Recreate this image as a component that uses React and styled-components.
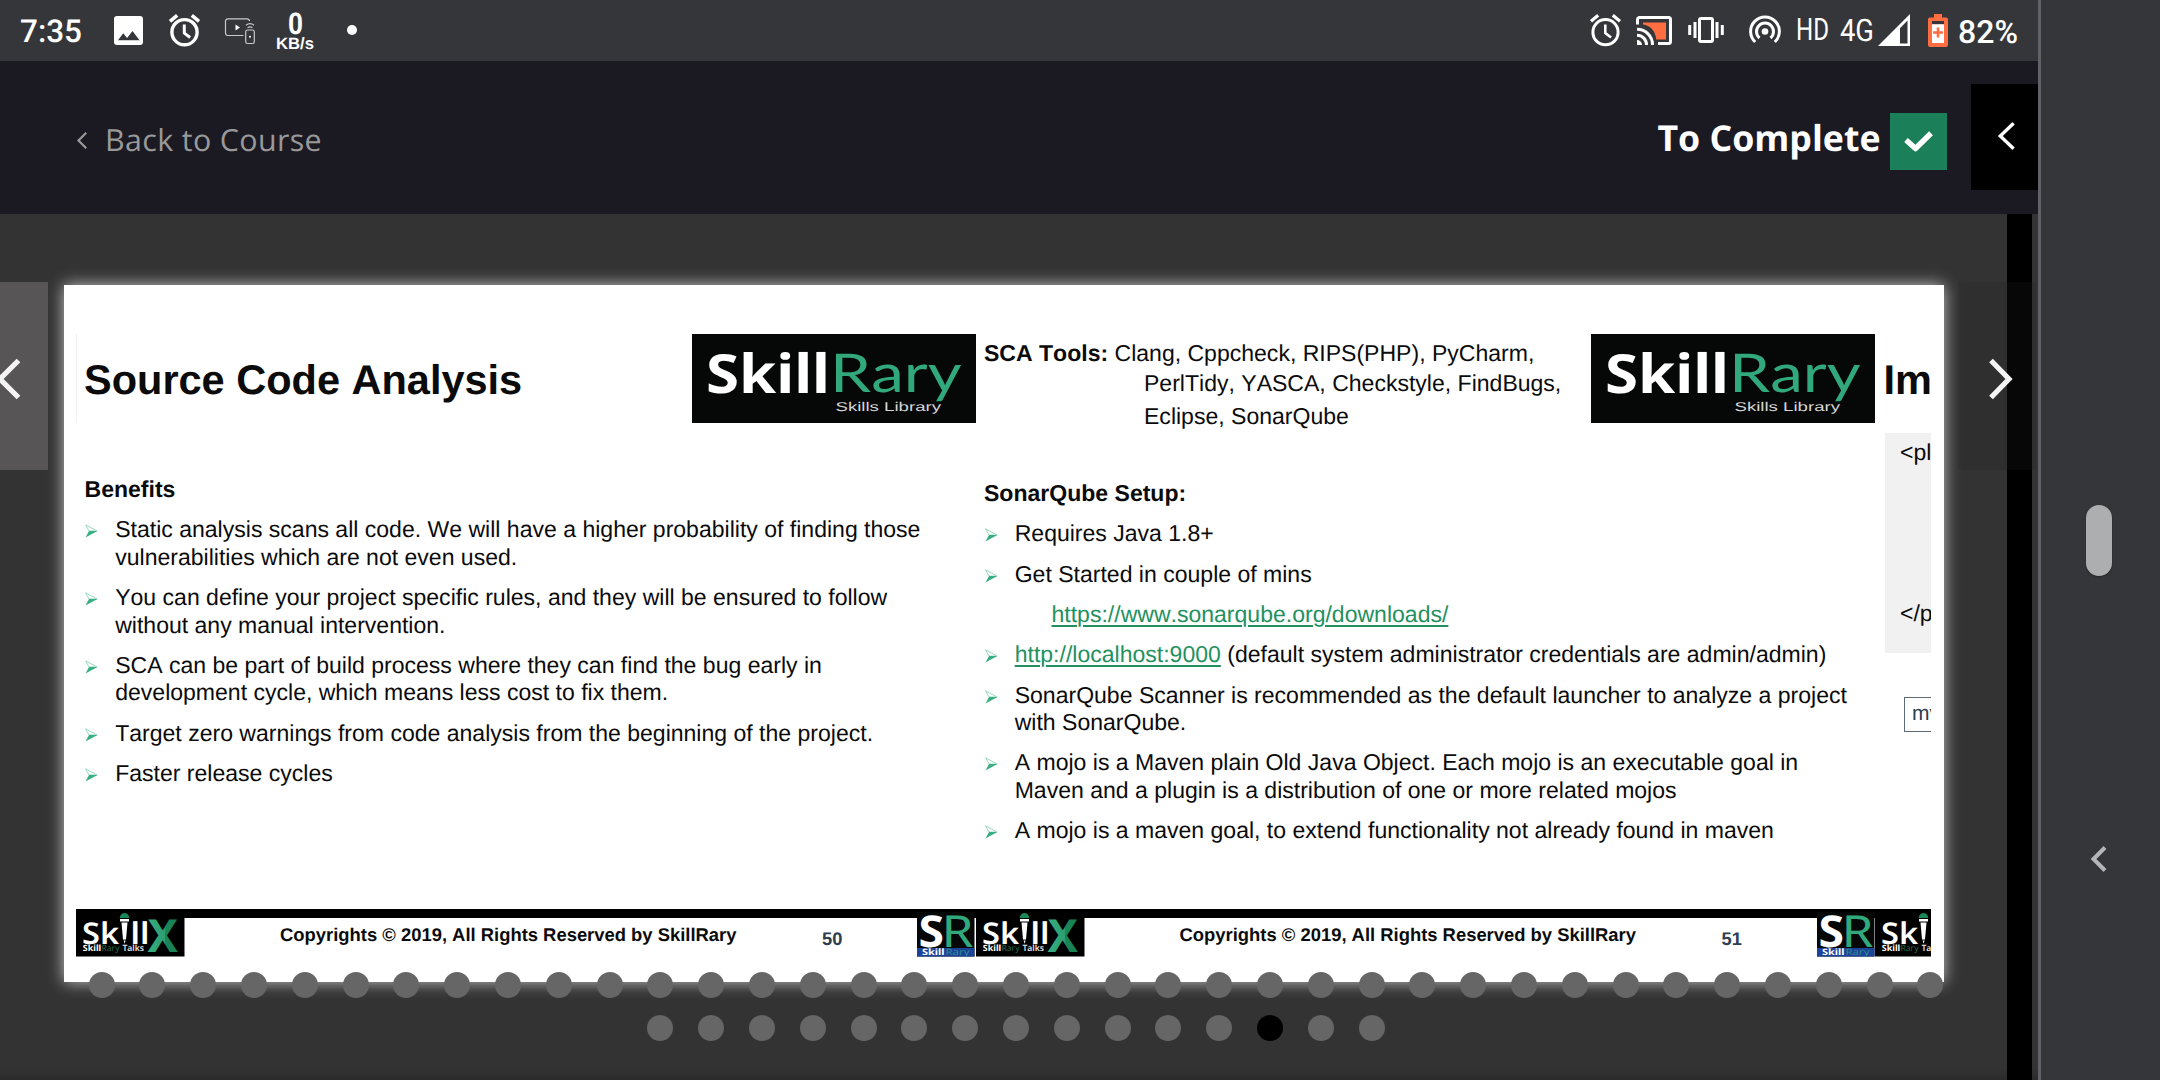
import React from 'react';
import styled, { createGlobalStyle } from 'styled-components';

const GlobalStyle = createGlobalStyle`
  * { box-sizing: border-box; }
  html, body { margin: 0; padding: 0; background: #333; overflow: hidden; }
  body { font-family: "Liberation Sans", Arial, sans-serif; text-rendering: geometricPrecision; }
  svg { display: block; flex-shrink: 0; overflow: visible; }
`;

/* ---------- shell ---------- */

const Screen = styled.div`
  display: flex;
  width: 2160px;
  height: 1080px;
  overflow: hidden;
`;

const Main = styled.div`
  display: flex;
  flex-direction: column;
  width: 2038px;
  height: 1080px;
  background: #333;
  overflow: hidden;
`;

const NavBar = styled.aside`
  flex: 1;
  display: flex;
  flex-direction: column;
  align-items: center;
  padding: 505px 4px 0 0;
  background: #35363a;
  border-left: 3px solid #616268;
`;

const HomePill = styled.div`
  width: 26px;
  height: 71px;
  border-radius: 13px;
  background: #adaeb0;
  margin-bottom: 270px;
  box-shadow: 0 1px 2px rgba(0, 0, 0, 0.3);
`;

/* ---------- status bar ---------- */

const StatusBar = styled.div`
  display: flex;
  justify-content: space-between;
  height: 61px;
  flex-shrink: 0;
  padding: 0 20px 0 20px;
  background: #35363a;
  color: #fff;
  font-family: Roboto, sans-serif;
`;

const StatusGroup = styled.div`
  display: flex;
  align-items: flex-start;
  height: 61px;
`;

const StatusText = styled.span`
  width: ${(p) => p.$w}px;
  margin-left: ${(p) => p.$ml || 0}px;
  font-size: ${(p) => p.$size || 32}px;
  font-weight: 500;
  line-height: 38px;
  padding-top: 12.5px;
  white-space: nowrap;
`;

const Speed = styled.div`
  display: flex;
  flex-direction: column;
  align-items: center;
  width: 38px;
  margin: 6px 0 0 21px;
`;

const StatusDot = styled.i`
  width: 10px;
  height: 10px;
  border-radius: 50%;
  background: #fff;
  margin: 25px 0 0 33px;
`;

const Slot = styled.span`
  display: block;
  margin-left: ${(p) => p.$ml}px;
  padding-top: ${(p) => p.$pt}px;
`;

const AlarmIcon = ({ sw = 3 }) => (
  <svg width="31" height="33" viewBox="0 0 31 33" fill="none" stroke="#fff" strokeWidth={sw}>
    <circle cx="15.5" cy="18.2" r="12.6" />
    <path d="M15.3 10.5v8.6l5.8 4.4" strokeWidth={sw - 0.4} />
    <path d="M1 7.3 8.2 1.3M30 7.3 22.800 1.3" strokeWidth={sw + 0.2} />
  </svg>
);

const ImageIcon = () => (
  <svg width="29" height="29" viewBox="0 0 29 29">
    <path
      fill="#fff"
      fillRule="evenodd"
      d="M3 0h23a3 3 0 0 1 3 3v23a3 3 0 0 1-3 3H3a3 3 0 0 1-3-3V3a3 3 0 0 1 3-3zM4 24.300h21.500L18.500 15l-5.400 7L9.200 17.300z"
    />
  </svg>
);

const CastPhoneIcon = () => (
  <svg width="30" height="27" viewBox="0 0 30 27" fill="none" stroke="#c9c9cb" strokeWidth="1.200">
    <path d="M18.500 17.500H3a2.500 2.500 0 0 1-2.500-2.500V3A2.500 2.500 0 0 1 3 .8h19a2.500 2.500 0 0 1 2.500 2.200" />
    <rect x="20.700" y="12" width="8.600" height="13.500" rx="1.800" />
    <path d="M21 7.200q4-3 8 0M22.600 9.800q2.400-1.800 4.800 0" />
    <path d="M10.500 6.500v6l4.500-3z" fill="#fff" stroke="none" />
    <circle cx="25" cy="18.700" r="1" fill="#fff" stroke="none" />
  </svg>
);

const CastIcon = () => (
  <svg width="36" height="30" viewBox="0 0 36 30" fill="none" stroke="#fff" strokeWidth="3">
    <path d="M7 6.500h23v17h-9.800C19.500 14.500 14 9.500 7 8.500z" fill="#ff6e40" stroke="none" />
    <path d="M1.500 8.500V3.500a2 2 0 0 1 2-2h29a2 2 0 0 1 2 2v22a2 2 0 0 1-2 2H22" />
    <path d="M1 13.200A15.500 15.500 0 0 1 16.500 29M1 19.200A9.500 9.500 0 0 1 10.500 29" />
    <path d="M1 24a5 5 0 0 1 5 5H1z" fill="#fff" stroke="none" />
  </svg>
);

const VibrateIcon = () => (
  <svg width="36" height="26" viewBox="0 0 36 26" fill="none" stroke="#fff">
    <rect x="11.500" y="1.500" width="13" height="23" rx="1.500" strokeWidth="3" />
    <path d="M7 5v16M29 5v16" strokeWidth="3" />
    <path d="M1.700 8v10M34.300 8v10" strokeWidth="3" />
  </svg>
);

const HotspotIcon = () => (
  <svg width="32" height="29" viewBox="0 0 32 29" fill="none" stroke="#fff" strokeWidth="3">
    <path d="M6.200 27A14.400 14.400 0 1 1 25.800 27" />
    <path d="M10.500 23A8.500 8.500 0 1 1 21.500 23" />
    <circle cx="16" cy="16.500" r="3.300" fill="#fff" stroke="none" />
  </svg>
);

const SignalIcon = () => (
  <svg width="32" height="32" viewBox="0 0 32 32">
    <path fill="#fff" fillRule="evenodd" d="M32 0v32H0zM29.500 6.500 22 14.200V29.500h7.500z" />
  </svg>
);

const BatteryIcon = () => (
  <svg width="20" height="33" viewBox="0 0 20 33">
    <path fill="#ff6e40" d="M6 0h8v3.500h4a2 2 0 0 1 2 2V31a2 2 0 0 1-2 2H2a2 2 0 0 1-2-2V5.500a2 2 0 0 1 2-2h4z" />
    <path fill="#35363a" d="M4 7h12v3.300H4z" />
    <path fill="#fff" d="M4 10.300h12V29H4z" />
    <path fill="#ff6e40" d="M8.700 13.500h2.600v3.700H15v2.600h-3.700v3.700H8.700v-3.700H5v-2.600h3.700z" />
  </svg>
);

/* text squeezed horizontally into a fixed width, as on the condensed status glyphs */
const Fit = ({ w, h, base, size, weight = 400, family = 'Roboto', children }) => (
  <svg width={w} height={h} fontFamily={`'${family}', sans-serif`} fill="#fff">
    <text x="0" y={base} fontSize={size} fontWeight={weight} textLength={w} lengthAdjust="spacingAndGlyphs">
      {children}
    </text>
  </svg>
);

/* ---------- course header ---------- */

const Header = styled.header`
  display: flex;
  align-items: flex-start;
  height: 153px;
  flex-shrink: 0;
  background: #1b1a23;
  font-family: "Open Sans", "Noto Sans", sans-serif;
`;

const BackLink = styled.a`
  display: flex;
  align-items: center;
  gap: 18px;
  margin: 57px auto 0 77px;
  height: 44px;
  color: #999;
  font-size: 30.4px;
  line-height: 44px;
  letter-spacing: 0.36px;
`;

const Complete = styled.div`
  display: flex;
  align-items: center;
  gap: 9px;
  margin: 52px 24.5px 0 0;
  color: #fff;
  font-size: 35.7px;
  font-weight: 700;
  line-height: 50px;
`;

const CompleteLabel = styled.span`
  margin-top: -8px;
`;

const CheckBox = styled.span`
  display: grid;
  place-items: center;
  width: 57px;
  height: 57px;
  background: #1b7f5a;
`;

const DrawerToggle = styled.button`
  display: flex;
  align-items: flex-start;
  width: 67px;
  height: 105.5px;
  margin-top: 23px;
  padding: 38px 0 0 27px;
  border: 0;
  background: #000;
`;

/* ---------- viewer ---------- */

const Viewer = styled.section`
  position: relative;
  flex: 1;
  display: flex;
  flex-direction: column;
  padding: 71px 0 0 64px;
  background: linear-gradient(#333 0, #333 855px, #2a2a2a 866px);
`;

const DarkStrip = styled.div`
  position: absolute;
  top: 0;
  left: 2007px;
  width: 25px;
  height: 100%;
  background: #000;
`;

const Card = styled.div`
  width: 1880px;
  height: 697px;
  flex-shrink: 0;
  padding: 0 13px 0 12px;
  background: #fff;
  box-shadow: 0 0 15px rgba(255, 255, 255, 0.72);
`;

const Deck = styled.div`
  display: flex;
  width: 1855px;
  height: 100%;
  overflow: hidden;
`;

const NavArrow = styled.button`
  position: absolute;
  top: 68px;
  left: ${(p) => (p.$next ? 1958 : 0)}px;
  width: ${(p) => (p.$next ? 78 : 48)}px;
  height: 188px;
  padding: ${(p) => (p.$next ? '6px 0 0 30px' : '6px 0 0 0')};
  display: flex;
  align-items: center;
  border: 0;
  overflow: hidden;
  background: ${(p) => (p.$next ? 'rgba(33,33,33,0.2)' : '#575555')};
`;

const Dots = styled.div`
  position: relative;
  display: flex;
  flex-wrap: wrap;
  justify-content: center;
  align-content: flex-start;
  gap: 17px 24.81px;
  width: 1856px;
  margin: -10.500px 0 0 24px;
`;

const Dot = styled.i`
  width: 26px;
  height: 26px;
  border-radius: 50%;
  background: ${(p) => (p.$active ? '#000' : '#666')};
`;

/* ---------- slide ---------- */

const Slide = styled.article`
  display: flex;
  flex-direction: column;
  width: ${(p) => p.$w || 899.5}px;
  flex-shrink: 0;
  padding: 49px 0 26px;
  color: #0b0b0b;
  font-kerning: none;
`;

const SlideHead = styled.div`
  display: flex;
  justify-content: space-between;
  height: 89px;
  flex-shrink: 0;
  padding-left: ${(p) => (p.$rule ? 7 : 8.5)}px;
  border-left: ${(p) => (p.$rule ? '1px solid #f0f0f0' : '0')};
`;

const SlideTitle = styled.h1`
  margin: 21.5px 0 0;
  font-size: 41.5px;
  line-height: 47px;
  white-space: nowrap;
`;

const ToolLines = styled.div`
  display: flex;
  flex-direction: column;
  padding-top: 3.5px;
  font-size: 23.040px;
  line-height: 30px;
  white-space: nowrap;
`;

const ToolLine = styled.span`
  padding-left: ${(p) => (p.$indent ? 160 : 0)}px;
  margin-top: ${(p) => p.$mt || 0}px;
`;

const SlideBody = styled.div`
  display: flex;
  flex-direction: column;
  gap: 12.8px;
  margin-top: ${(p) => p.$mt}px;
  padding-left: 8.5px;
  font-size: 23.040px;
  line-height: 27.5px;
  white-space: nowrap;
`;

const Item = styled.div`
  display: flex;
  padding-left: ${(p) => (p.$indent ? 67.5 : 0)}px;
`;

const Mark = styled.span`
  width: 30.7px;
  padding: 8px 0 0 0.5px;
  flex-shrink: 0;
`;

const Link = styled.a`
  color: #22915f;
  text-decoration: underline;
  text-decoration-thickness: 1.5px;
  text-underline-offset: 3px;
`;

const Bullet = ({ children }) => (
  <Item>
    <Mark>
      <svg width="13" height="14" viewBox="0 0 13 14">
        <path d="M.6.800 12 7H4z" fill="none" stroke="#8fd6b8" strokeWidth=".9" />
        <path d="M4 7h8.500L.5 13.500z" fill="#3aae82" />
      </svg>
    </Mark>
    <div>{children}</div>
  </Item>
);

const Footer = styled.footer`
  display: flex;
  align-items: flex-start;
  height: 47px;
  margin-top: auto;
  background: linear-gradient(#000 0, #000 9px, transparent 9px);
  font-weight: 700;
`;

const Copyright = styled.span`
  width: 457px;
  margin: 14.5px 85px 0 95.500px;
  font-size: 18.42px;
  line-height: 22px;
  white-space: nowrap;
`;

const PageNo = styled.span`
  width: 95px;
  margin-top: 19px;
  color: #2c3e50;
  font-size: 18.300px;
  line-height: 21px;
`;

const CodeBox = styled.div`
  display: flex;
  flex-direction: column;
  justify-content: space-between;
  width: 46px;
  height: 220px;
  margin: 10px 0 0 10px;
  padding: 5px 0 26.5px 15px;
  background: #f1f1f1;
  font-size: 23px;
  line-height: 28px;
  white-space: nowrap;
`;

const CommandBox = styled.div`
  height: 35px;
  width: 60px;
  margin: 44px 0 0 28.500px;
  padding: 2px 0 0 7.5px;
  border: 1.500px solid #5d6a78;
  color: #2c3e50;
  font-size: 21px;
  line-height: 28px;
`;

const SkillRaryLogo = () => (
  <svg width="284" height="89" viewBox="0 0 284 89" fontFamily="'Noto Sans', 'Open Sans', sans-serif">
    <rect width="284" height="89" fill="#060807" />
    <text x="14" y="58.500" fontSize="54" fontWeight="700" fill="#fff" textLength="124" lengthAdjust="spacingAndGlyphs">Skill</text>
    <text x="138" y="57.700" fontSize="53.500" fontFamily="Lato, 'Open Sans', sans-serif" fill="#32a97c" textLength="131.500" lengthAdjust="spacingAndGlyphs">Rary</text>
    <text x="143.500" y="77.300" fontSize="12.700" fontFamily="'Liberation Sans', Arial, sans-serif" fill="#d6d6d6" textLength="105.500" lengthAdjust="spacingAndGlyphs">Skills Library</text>
  </svg>
);

const SkillXLogo = ({ id }) => (
  <svg width="108.500" height="47.500" viewBox="0 0 108.500 47.500" fontFamily="'Noto Sans', 'Open Sans', sans-serif">
    <defs>
      <linearGradient id={id}>
        <stop offset="0" stopColor="#36ad80" />
        <stop offset=".55" stopColor="#2d9f72" />
        <stop offset=".56" stopColor="#1b8658" />
        <stop offset="1" stopColor="#178052" />
      </linearGradient>
    </defs>
    <rect width="108.500" height="47.500" />
    <text x="6" y="34.500" fontSize="30" fontWeight="600" fill="#fff" textLength="37" lengthAdjust="spacingAndGlyphs">Sk</text>
    <path d="M43.800 9a4.700 5 0 0 1 9.400 0z" fill="#1b8658" />
    <path d="M44 10h9v2.500h-9zM45.500 13.500h6L50 30.500h-3zM47.600 31.500h2l-1 3.300z" fill="#fff" />
    <text x="54.500" y="34.500" fontSize="30" fontWeight="600" fill="#fff" textLength="19" lengthAdjust="spacingAndGlyphs">ll</text>
    <text x="71.500" y="42.600" fontSize="45.700" fontWeight="700" fill={`url(#${id})`} textLength="30.500" lengthAdjust="spacingAndGlyphs">X</text>
    <text x="6.800" y="42.300" fontSize="8.600" fontWeight="700" fill="#fff" textLength="18.500" lengthAdjust="spacingAndGlyphs">Skill</text>
    <text x="25.500" y="42.300" fontSize="8.600" fontWeight="400" fill="#23694c" textLength="18" lengthAdjust="spacingAndGlyphs">Rary</text>
    <text x="46.500" y="42.300" fontSize="8.600" fontWeight="600" fill="#e4e4e4" textLength="21.500" lengthAdjust="spacingAndGlyphs">Talks</text>
  </svg>
);

const SRLogo = () => (
  <svg width="57.500" height="47.500" viewBox="0 0 57.500 47.500" fontFamily="'Noto Sans', 'Open Sans', sans-serif">
    <rect y="3" width="57.500" height="44.500" fill="#060807" />
    <rect y="39" width="57.500" height="8.500" fill="#1d429a" />
    <text x="1.500" y="37.500" fontSize="44" fontWeight="700" fill="#fff" textLength="25.500" lengthAdjust="spacingAndGlyphs">S</text>
    <text x="24.500" y="37.500" fontSize="44" fontWeight="400" fill="#32a97c" textLength="32" lengthAdjust="spacingAndGlyphs">R</text>
    <text x="5" y="46.300" fontSize="8.800" fontWeight="700" fill="#fff" textLength="22.500" lengthAdjust="spacingAndGlyphs">Skill</text>
    <text x="28.500" y="46.300" fontSize="8.800" fontWeight="400" fill="#2a8f8a" textLength="24" lengthAdjust="spacingAndGlyphs">Rary</text>
  </svg>
);

const SlideFooter = ({ page }) => (
  <Footer>
    <SkillXLogo id={`x${page}`} />
    <Copyright>Copyrights © 2019, All Rights Reserved by SkillRary</Copyright>
    <PageNo>{page}</PageNo>
    <SRLogo />
  </Footer>
);

export default function App() {
  return (
    <Screen>
      <GlobalStyle />
      <Main>
        <StatusBar>
          <StatusGroup>
            <StatusText $w={94} $size={31.5}>7:35</StatusText>
            <Slot $ml={0} $pt={16}><ImageIcon /></Slot>
            <Slot $ml={26} $pt={14}><AlarmIcon sw={3.4} /></Slot>
            <Slot $ml={25} $pt={18}><CastPhoneIcon /></Slot>
            <Speed>
              <Fit w={15} h={30} base={27.5} size={30} weight={700}>0</Fit>
              <Fit w={38} h={16} base={13} size={16.5} weight={700} family="Liberation Sans">KB/s</Fit>
            </Speed>
            <StatusDot />
          </StatusGroup>
          <StatusGroup>
            <Slot $ml={0} $pt={14}><AlarmIcon /></Slot>
            <Slot $ml={15} $pt={16}><CastIcon /></Slot>
            <Slot $ml={16} $pt={17}><VibrateIcon /></Slot>
            <Slot $ml={25} $pt={15}><HotspotIcon /></Slot>
            <Slot $ml={15} $pt={0}><Fit w={33} h={60} base={40} size={31}>HD</Fit></Slot>
            <Slot $ml={11} $pt={0}><Fit w={34} h={60} base={41} size={31}>4G</Fit></Slot>
            <Slot $ml={4} $pt={14}><SignalIcon /></Slot>
            <Slot $ml={18} $pt={14}><BatteryIcon /></Slot>
            <StatusText $ml={10} $w={60}>82%</StatusText>
          </StatusGroup>
        </StatusBar>

        <Header>
          <BackLink>
            <svg width="10" height="17" viewBox="0 0 10 17" fill="none" stroke="#999" strokeWidth="2.200">
              <path d="M9.200.800 1.500 8.500l7.700 7.700" />
            </svg>
            Back to Course
          </BackLink>
          <Complete>
            <CompleteLabel>To Complete</CompleteLabel>
            <CheckBox>
              <svg width="29" height="21" viewBox="0 0 29 21" fill="none" stroke="#fff" strokeWidth="5.500" strokeLinejoin="round">
                <path d="M2 9l9.500 8.500L27 2.200" />
              </svg>
            </CheckBox>
          </Complete>
          <DrawerToggle>
            <svg width="17" height="28" viewBox="0 0 17 28" fill="none" stroke="#fff" strokeWidth="3.400">
              <path d="M15.600 1.200 2.300 14l13.300 12.800" />
            </svg>
          </DrawerToggle>
        </Header>

        <Viewer>
          <DarkStrip />
          <Card>
            <Deck>
              <Slide>
                <SlideHead $rule>
                  <SlideTitle>Source Code Analysis</SlideTitle>
                  <SkillRaryLogo />
                </SlideHead>
                <SlideBody $mt={53}>
                  <b>Benefits</b>
                  <Bullet>Static analysis scans all code. We will have a higher probability of finding those<br />vulnerabilities which are not even used.</Bullet>
                  <Bullet>You can define your project specific rules, and they will be ensured to follow<br />without any manual intervention.</Bullet>
                  <Bullet>SCA can be part of build process where they can find the bug early in<br />development cycle, which means less cost to fix them.</Bullet>
                  <Bullet>Target zero warnings from code analysis from the beginning of the project.</Bullet>
                  <Bullet>Faster release cycles</Bullet>
                </SlideBody>
                <SlideFooter page="50" />
              </Slide>

              <Slide>
                <SlideHead>
                  <ToolLines>
                    <ToolLine><b>SCA Tools:</b> Clang, Cppcheck, RIPS(PHP), PyCharm,</ToolLine>
                    <ToolLine $indent>PerlTidy, YASCA, Checkstyle, FindBugs,</ToolLine>
                    <ToolLine $indent $mt={3.5}>Eclipse, SonarQube</ToolLine>
                  </ToolLines>
                  <SkillRaryLogo />
                </SlideHead>
                <SlideBody $mt={57.2}>
                  <b>SonarQube Setup:</b>
                  <Bullet>Requires Java 1.8+</Bullet>
                  <Bullet>Get Started in couple of mins</Bullet>
                  <Item $indent><Link>https://www.sonarqube.org/downloads/</Link></Item>
                  <Bullet><Link>http://localhost:9000</Link> (default system administrator credentials are admin/admin)</Bullet>
                  <Bullet>SonarQube Scanner is recommended as the default launcher to analyze a project<br />with SonarQube.</Bullet>
                  <Bullet>A mojo is a Maven plain Old Java Object. Each mojo is an executable goal in<br />Maven and a plugin is a distribution of one or more related mojos</Bullet>
                  <Bullet>A mojo is a maven goal, to extend functionality not already found in maven</Bullet>
                </SlideBody>
                <SlideFooter page="51" />
              </Slide>

              <Slide $w={56}>
                <SlideHead>
                  <SlideTitle>Im</SlideTitle>
                </SlideHead>
                <CodeBox>
                  <span>&lt;pl</span>
                  <span>&lt;/p</span>
                </CodeBox>
                <CommandBox>mv</CommandBox>
                <Footer><SkillXLogo id="x52" /></Footer>
              </Slide>
            </Deck>
          </Card>
          <Dots>
            {Array.from({ length: 52 }, (_, i) => <Dot key={i} $active={i === 49} />)}
          </Dots>
          <NavArrow>
            <svg width="20" height="42" viewBox="0 0 20 42" fill="none" stroke="#f4f4f4" strokeWidth="5.200">
              <path d="M18.500 2.500 0 21l18.500 18.500" />
            </svg>
          </NavArrow>
          <NavArrow $next>
            <svg width="26" height="42" viewBox="0 0 26 42" fill="none" stroke="#f4f4f4" strokeWidth="5.200">
              <path d="M3 2.500 21 21 3 39.500" />
            </svg>
          </NavArrow>
        </Viewer>
      </Main>
      <NavBar>
        <HomePill />
        <svg width="16" height="26" viewBox="0 0 16 26" fill="none" stroke="#b4b5b7" strokeWidth="4">
          <path d="M14 1.500 2.500 13 14 24.500" />
        </svg>
      </NavBar>
    </Screen>
  );
}
